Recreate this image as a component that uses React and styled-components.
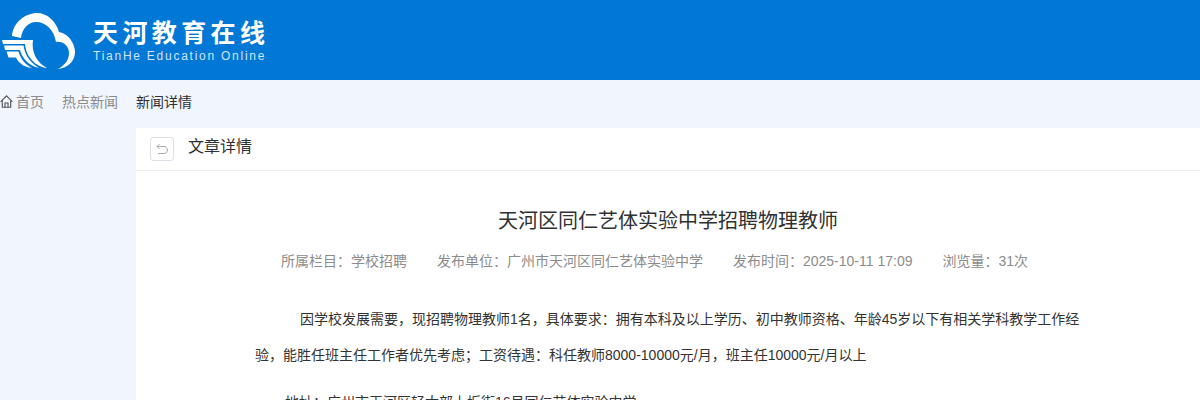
import React from 'react'
import styled, { createGlobalStyle } from 'styled-components'

const Global = createGlobalStyle`
  html, body {
    margin: 0;
    padding: 0;
    height: 400px;
    overflow: hidden;
    background: #f0f5fe;
    font-family: "Liberation Sans", "Noto Sans CJK SC", sans-serif;
  }
`

const Header = styled.header`
  height: 80px;
  background: #0177d6;
  display: flex;
  align-items: center;
`

const Logo = styled.div`
  display: flex;
  align-items: center;
  gap: 13px;
  color: #fff;
`

const LogoText = styled.div`
  display: flex;
  flex-direction: column;
  gap: 3px;
  margin-top: -2px;
`

const LogoTitle = styled.div`
  font-family: "Noto Sans CJK SC", sans-serif;
  font-size: 25px;
  line-height: 30px;
  font-weight: 700;
  letter-spacing: 4.4px;
  white-space: nowrap;
`

const LogoSub = styled.div`
  font-size: 12px;
  line-height: 14px;
  letter-spacing: 1.75px;
  color: #cfe6f8;
  white-space: nowrap;
`

const Crumbs = styled.nav`
  height: 42px;
  padding-bottom: 6px;
  display: flex;
  align-items: center;
  gap: 18px;
  font-size: 14px;
`

const Crumb = styled.span`
  color: ${p => (p.$current ? '#303133' : '#8c8c8c')};
  display: flex;
  align-items: center;
  gap: 3px;
`

const Body = styled.div`
  padding-left: 136px;
`

const Panel = styled.main`
  background: #fff;
  height: 272px;
  overflow: hidden;
`

const PanelHead = styled.div`
  height: 42px;
  border-bottom: 1px solid #ebeef5;
  display: flex;
  align-items: center;
  padding-left: 14px;
  gap: 14px;
`

const BackButton = styled.button`
  width: 24px;
  height: 24px;
  padding: 0;
  background: #fff;
  border: 1px solid #dcdfe6;
  border-radius: 3px;
  display: flex;
  align-items: center;
  justify-content: center;
`

const PanelTitle = styled.div`
  font-size: 16px;
  color: #303133;
  padding-bottom: 8px;
`

const Article = styled.article`
  width: 826px;
  margin-left: 119px;
`

const Title = styled.h1`
  margin: 36px 0 0;
  font-size: 20px;
  line-height: 28px;
  font-weight: 400;
  color: #303133;
  text-align: center;
`

const Meta = styled.div`
  margin-top: 16px;
  margin-bottom: 30px;
  padding-right: 27px;
  display: flex;
  justify-content: center;
  gap: 30px;
  font-size: 14px;
  line-height: 20px;
  color: #8c8c8c;
`

const Para = styled.p`
  margin: 0 0 11px;
  font-size: 14px;
  line-height: 36px;
  color: #333;
  text-indent: ${p => p.$indent};
`

function LogoMark() {
  return (
    <svg width="80" height="80" viewBox="0 0 80 80" fill="#fff">
      <path d="M12 36 C13 22 26 13 37 13 C47 13 56 21 59 32 C69 34 75 44 75 52 C75 61 68 68 58 69 C65 65 69 60 69 53 C69 46 63 41 56 42 C54 30 46 22 36 22 C28 22 22 29 21 38 Z" />
      <path d="M2 40 H33 C31 52 37 63 47 68 C36 67 26 57 25 44 H3 Z" />
      <path d="M4 45.5 H23.5 C25 56 31 63 39 68 C29 66 22 58 20 50 H5 Z" />
      <path d="M6.500 51.500 H18.500 C21 60 26 65 32 68 C23 67 18 62 16 57.500 H8.500 Z" />
    </svg>
  )
}

function HomeIcon() {
  return (
    <svg width="13" height="13" viewBox="0 0 13 13" fill="none" stroke="#555" strokeWidth="1.1">
      <path d="M0.6 6.8 L6.500 0.900 L12.400 6.800" />
      <path d="M2.300 5.300 V12.200 H10.700 V5.300" />
      <path d="M5 12.200 V8 H8 V12.200" />
    </svg>
  )
}

function BackIcon() {
  return (
    <svg width="14" height="14" viewBox="0 0 14 14" fill="none" stroke="#a8abb2" strokeWidth="1">
      <path d="M4.500 2 L2 4.500 L4.500 7" />
      <path d="M2 4.500 H9 C11 4.500 12.500 6 12.500 8 C12.500 10 11 11.500 9 11.500 H3" />
    </svg>
  )
}

export default function App() {
  return (
    <>
      <Global />
      <Header>
        <Logo>
          <LogoMark />
          <LogoText>
            <LogoTitle>天河教育在线</LogoTitle>
            <LogoSub>TianHe Education Online</LogoSub>
          </LogoText>
        </Logo>
      </Header>
      <Crumbs>
        <Crumb><HomeIcon />首页</Crumb>
        <Crumb>热点新闻</Crumb>
        <Crumb $current>新闻详情</Crumb>
      </Crumbs>
      <Body>
        <Panel>
          <PanelHead>
            <BackButton><BackIcon /></BackButton>
            <PanelTitle>文章详情</PanelTitle>
          </PanelHead>
          <Article>
            <Title>天河区同仁艺体实验中学招聘物理教师</Title>
            <Meta>
              <span>所属栏目：学校招聘</span>
              <span>发布单位：广州市天河区同仁艺体实验中学</span>
              <span>发布时间：2025-10-11 17:09</span>
              <span>浏览量：31次</span>
            </Meta>
            <Para $indent="45px">因学校发展需要，现招聘物理教师1名，具体要求：拥有本科及以上学历、初中教师资格、年龄45岁以下有相关学科教学工作经验，能胜任班主任工作者优先考虑；工资待遇：科任教师8000-10000元/月，班主任10000元/月以上</Para>
            <Para $indent="30px">地址：广州市天河区轻大部上坂街16号同仁艺体实验中学</Para>
          </Article>
        </Panel>
      </Body>
    </>
  )
}
